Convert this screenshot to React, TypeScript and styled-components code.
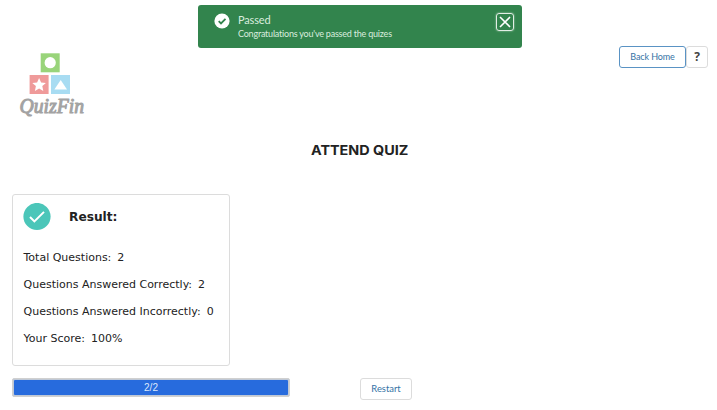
import React from "react";
import styled, { createGlobalStyle } from "styled-components";

const GlobalStyle = createGlobalStyle`
  * { box-sizing: border-box; }
  body { margin: 0; background: #fff; overflow: hidden; }
`;

const Page = styled.main`
  position: relative;
  display: flex;
  flex-direction: column;
  width: 717px;
  height: 410px;
  padding: 45px 9px 0 12px;
  background: #fff;
  font-family: Lato, sans-serif;
  color: #222;
`;

const Toast = styled.div`
  position: absolute;
  top: 5px;
  left: 198px;
  display: flex;
  align-items: flex-start;
  width: 324px;
  height: 43px;
  padding: 8px 8px 0 16px;
  border-radius: 3px;
  background: #32844d;
  color: #d9ecdf;
`;

const ToastBody = styled.div`
  flex: 1;
  padding-left: 8px;
`;

const ToastTitle = styled.div`
  font-size: 11px;
  line-height: 14px;
  letter-spacing: -0.15px;
`;

const ToastMessage = styled.div`
  font-size: 9px;
  line-height: 13px;
  letter-spacing: -0.21px;
  white-space: nowrap;
`;

const CloseButton = styled.button`
  display: flex;
  align-items: center;
  justify-content: center;
  width: 18px;
  height: 18px;
  padding: 0;
  border: 1px solid #e2eee5;
  border-radius: 3px;
  background: transparent;
  box-shadow: 0 0 2px #b5d5be;
`;

const Header = styled.header`
  display: flex;
  justify-content: space-between;
  align-items: flex-start;
  height: 96px;
`;

const Logo = styled.svg`
  display: block;
  overflow: visible;
  margin: 7px 0 0 6px;
`;

const Actions = styled.div`
  display: flex;
  padding-top: 1px;
`;

const Button = styled.button<{ $width: number; $outlined?: boolean }>`
  width: ${(p) => p.$width}px;
  height: 22px;
  padding: 0;
  border: 1px solid ${(p) => (p.$outlined ? "#5a93c4" : "#dcdcdc")};
  border-radius: 3px;
  background: #fff;
  color: #3472a5;
  font: ${(p) => (p.$outlined ? "9px" : "9.4px")}/20px Lato, sans-serif;
  letter-spacing: ${(p) => (p.$outlined ? "-0.1px" : "0")};
`;

const HelpButton = styled(Button)`
  color: #444;
  font: 700 12px/20px "Open Sans", sans-serif;
`;

const Title = styled.h1`
  align-self: center;
  height: 53px;
  margin: 0;
  font: 700 13.2px/19px Inter, sans-serif;
  transform: scaleX(1.09);
`;

const Card = styled.section`
  width: 218px;
  height: 172px;
  padding: 8px 10px;
  border: 1px solid #dcdcdc;
  border-radius: 3px;
  font-family: "DejaVu Sans", sans-serif;
`;

const CardHeader = styled.div`
  display: flex;
  align-items: center;
  gap: 18px;
  height: 27px;
`;

const ResultTitle = styled.h2`
  margin: 0;
  font-size: 12.2px;
  line-height: 18px;
`;

const Results = styled.dl`
  margin: 14px 0 0;
`;

const ResultRow = styled.div`
  display: flex;
  gap: 6px;
  height: 27px;
  padding-left: 0.5px;
  align-items: center;
  font-size: 11px;
  white-space: nowrap;
`;

const Label = styled.dt``;

const Value = styled.dd`
  margin: 0;
`;

const Footer = styled.footer`
  display: flex;
  align-items: flex-start;
  gap: 70px;
  padding-top: 12px;
`;

const Progress = styled.div`
  width: 278px;
  height: 19px;
  padding: 1px;
  border: 1px solid #d0d0d0;
  border-radius: 2px;
  background: #bfc8d6;
`;

const ProgressFill = styled.div`
  height: 15px;
  border-radius: 1px;
  background: #276bdd;
  color: #dce8fc;
  font: 10px/15px "Liberation Sans", sans-serif;
  text-align: center;
`;

const results = [
  ["Total Questions:", "2"],
  ["Questions Answered Correctly:", "2"],
  ["Questions Answered Incorrectly:", "0"],
  ["Your Score:", "100%"],
];

export default function App() {
  return (
    <Page>
      <GlobalStyle />
      <Header>
        <Logo width="70" height="70" viewBox="0 0 70 70">
          <rect x="22.7" y="1.3" width="19" height="19" fill="#99d47a" />
          <circle cx="32.2" cy="10.7" r="5.6" fill="#fff" />
          <rect x="11.6" y="23" width="19" height="19" fill="#ef9a9a" />
          <path d="m21.1 26 2 4.4 4.8.5-3.6 3.2 1 4.8-4.2-2.4-4.2 2.4 1-4.8-3.6-3.2 4.8-.5z" fill="#fff" />
          <rect x="33" y="23" width="19" height="19" fill="#a8dcf2" />
          <path d="m42.7 28 6.3 9.5H36.4z" fill="#fff" />
          <text x="1.5" y="60.5" fill="#a3a3a3" stroke="#a3a3a3" strokeWidth="1.1" strokeLinejoin="round" fontFamily="Liberation Serif, serif" fontSize="21" fontStyle="italic" textLength="64.5" lengthAdjust="spacingAndGlyphs">QuizFin</text>
        </Logo>
        <Actions>
          <Button $width={67} $outlined>Back Home</Button>
          <HelpButton $width={22}>?</HelpButton>
        </Actions>
      </Header>
      <Title>ATTEND QUIZ</Title>
      <Card>
        <CardHeader>
          <svg width="28" height="28" viewBox="0 0 28 28">
            <circle cx="14" cy="13.5" r="13.6" fill="#4bc6b9" />
            <path d="m7 14 4.4 4.4L21 8.9" fill="none" stroke="#fff" strokeWidth="2" />
          </svg>
          <ResultTitle>Result:</ResultTitle>
        </CardHeader>
        <Results>
          {results.map(([label, value]) => (
            <ResultRow key={label}>
              <Label>{label}</Label>
              <Value>{value}</Value>
            </ResultRow>
          ))}
        </Results>
      </Card>
      <Footer>
        <Progress>
          <ProgressFill>2/2</ProgressFill>
        </Progress>
        <Button $width={52}>Restart</Button>
      </Footer>
      <Toast>
        <svg width="16" height="16" viewBox="0 0 16 16">
          <circle cx="8" cy="8" r="7.6" fill="#fff" />
          <path d="m4.7 8.2 2.3 2.3 4.5-4.6" fill="none" stroke="#32844d" strokeWidth="1.8" />
        </svg>
        <ToastBody>
          <ToastTitle>Passed</ToastTitle>
          <ToastMessage>Congratulations you've passed the quizes</ToastMessage>
        </ToastBody>
        <CloseButton aria-label="Close">
          <svg width="12" height="12" viewBox="0 0 12 12">
            <path d="m1 1 10 10M11 1 1 11" stroke="#fff" strokeWidth="1.6" />
          </svg>
        </CloseButton>
      </Toast>
    </Page>
  );
}
